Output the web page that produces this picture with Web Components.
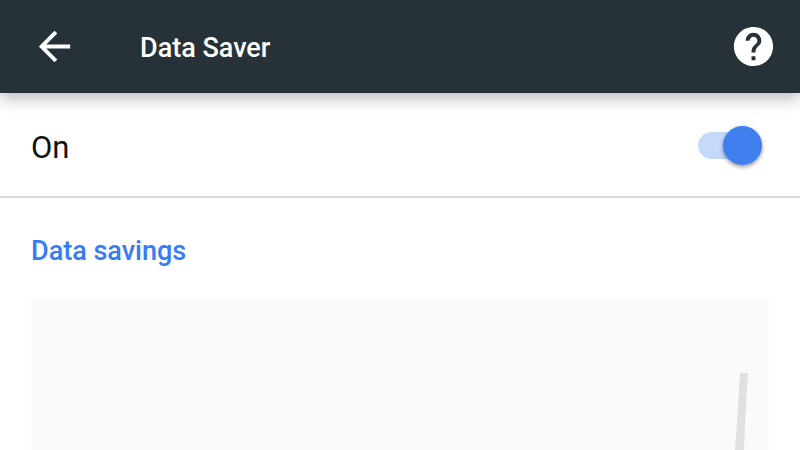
<!DOCTYPE html>
<html lang="en">
<head>
<meta charset="utf-8">
<meta name="viewport" content="width=device-width, initial-scale=1">
<title>Data Saver</title>
<style>
body { margin: 0; background: #fff; font-family: Roboto, "Noto Sans", sans-serif; }
</style>
</head>
<body>
<settings-page>
  <app-toolbar slot="toolbar">Data Saver</app-toolbar>
  <switch-row>On</switch-row>
  <savings-section>Data savings</savings-section>
</settings-page>

<script>
class BaseElement extends HTMLElement {
  constructor() {
    super();
    this.attachShadow({ mode: "open" }).innerHTML = this.constructor.markup;
  }
}

class SettingsPage extends BaseElement {
  static markup = `
    <style>
      :host { display: flex; flex-direction: column; height: 100vh; overflow: hidden; }
      main { flex: 1; min-height: 0; display: flex; flex-direction: column; }
    </style>
    <slot name="toolbar"></slot>
    <main><slot></slot></main>`;
}

class AppToolbar extends BaseElement {
  static markup = `
    <style>
      :host { display: block; position: relative; background: #263238; color: #fff;
        box-shadow: 0 6px 14px rgba(0, 0, 0, .26); }
      header { display: flex; align-items: center; box-sizing: border-box;
        height: 93px; padding: 0 23px 0 31px; }
      h1 { flex: 1; margin: 0 0 0 62px; padding-top: 3px; font-size: 27px; line-height: 32px; font-weight: 500; }
      button { display: flex; padding: 0; border: 0; background: none; color: inherit; cursor: pointer; }
      svg { display: block; width: 47px; height: 47px; fill: currentColor; }
    </style>
    <header>
      <button type="button" aria-label="Back">
        <svg viewBox="0 0 24 24"><path d="M20 11H7.83l5.59-5.59L12 4l-8 8 8 8 1.41-1.41L7.83 13H20v-2z"/></svg>
      </button>
      <h1><slot></slot></h1>
      <button type="button" aria-label="Help">
        <svg viewBox="0 0 24 24"><path d="M12 2C6.48 2 2 6.48 2 12s4.48 10 10 10 10-4.48 10-10S17.52 2 12 2zm1 17h-2v-2h2v2zm2.07-7.75l-.9.92C13.45 12.9 13 13.5 13 15h-2v-.5c0-1.1.45-2.1 1.17-2.83l1.24-1.26c.37-.36.59-.86.59-1.41 0-1.1-.9-2-2-2s-2 .9-2 2H8c0-2.21 1.79-4 4-4s4 1.79 4 4c0 .88-.36 1.68-.93 2.25z"/></svg>
      </button>
    </header>`;
}

class SwitchRow extends BaseElement {
  static markup = `
    <style>
      :host { display: block; border-bottom: 2px solid #dcdcdc; }
      label { display: flex; align-items: center; justify-content: space-between;
        box-sizing: border-box; height: 103px; padding: 2px 38px 0 31px;
        font-size: 31px; line-height: 36px; color: #111; cursor: pointer; }
      span { padding-top: 4px; }
      input { appearance: none; display: grid; align-items: center; width: 64px; height: 39px;
        margin: 0 0 0 16px; cursor: pointer; }
      input::before, input::after { content: ""; grid-area: 1 / 1; }
      input::before { width: 52px; height: 27px; border-radius: 14px; background: #c5d9fb; }
      input::after { width: 39px; height: 39px; border-radius: 50%; background: #4080ee;
        box-shadow: 0 2px 4px rgba(0, 0, 0, .4); }
      input:checked::after { justify-self: end; }
    </style>
    <label><span><slot></slot></span><input type="checkbox" role="switch" aria-label="On" checked></label>`;
}

class SavingsSection extends BaseElement {
  static markup = `
    <style>
      :host { display: flex; flex-direction: column; flex: 1; min-height: 0; padding: 37px 31px 0; }
      h2 { margin: 0 0 32px; font-size: 27px; line-height: 32px; font-weight: 500; color: #367cf4; }
    </style>
    <h2><slot></slot></h2>
    <savings-chart></savings-chart>`;
}

class SavingsChart extends BaseElement {
  static markup = `
    <style>
      :host { display: flex; justify-content: flex-end; flex: 1; min-height: 151px;
        box-sizing: border-box; padding: 74px 20px 0 0; background: #fafafa; }
      svg { display: block; width: 14px; height: 77px; }
    </style>
    <svg viewBox="0 0 14 77" aria-hidden="true"><path d="M5 0H13Q10 46 9 77H0Q3 40 5 0Z" fill="#e0e0e0"/></svg>`;
}

customElements.define("settings-page", SettingsPage);
customElements.define("app-toolbar", AppToolbar);
customElements.define("switch-row", SwitchRow);
customElements.define("savings-section", SavingsSection);
customElements.define("savings-chart", SavingsChart);
</script>
</body>
</html>
